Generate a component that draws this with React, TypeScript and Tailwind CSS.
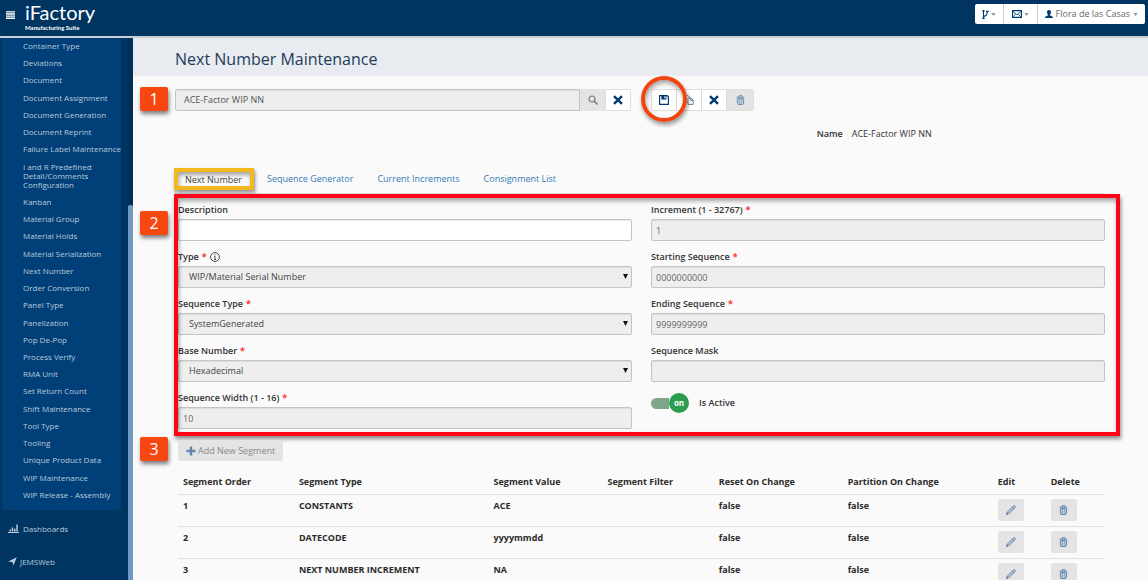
import React from "react";

type IconProps = { className?: string };

const menuItems = [
  "Container Type",
  "Deviations",
  "Document",
  "Document Assignment",
  "Document Generation",
  "Document Reprint",
  "Failure Label Maintenance",
  "I and R Predefined Detail/Comments Configuration",
  "Kanban",
  "Material Group",
  "Material Holds",
  "Material Serialization",
  "Next Number",
  "Order Conversion",
  "Panel Type",
  "Panelization",
  "Pop De-Pop",
  "Process Verify",
  "RMA Unit",
  "Set Return Count",
  "Shift Maintenance",
  "Tool Type",
  "Tooling",
  "Unique Product Data",
  "WIP Maintenance",
  "WIP Release - Assembly",
];

const segments = [
  { order: "1", type: "CONSTANTS", value: "ACE", filter: "", reset: "false", partition: "false" },
  { order: "2", type: "DATECODE", value: "yyyymmdd", filter: "", reset: "false", partition: "false" },
  { order: "3", type: "NEXT NUMBER INCREMENT", value: "NA", filter: "", reset: "false", partition: "false" },
];

function CloseIcon({ className }: IconProps) {
  return (
    <svg viewBox="0 0 10 10" className={className} fill="none" stroke="currentColor" strokeWidth="2.4" aria-hidden="true">
      <path d="M1 1.2 9 8.8M9 1.2 1 8.8" />
    </svg>
  );
}

function SearchIcon({ className }: IconProps) {
  return (
    <svg viewBox="0 0 10 10" className={className} fill="none" stroke="currentColor" strokeWidth="1.2" aria-hidden="true">
      <circle cx="4" cy="4" r="3" />
      <path d="M6.2 6.2 9.4 9.4" strokeWidth="1.6" />
    </svg>
  );
}

function SaveIcon({ className }: IconProps) {
  return (
    <svg viewBox="0 0 10 10" className={className} aria-hidden="true">
      <path d="M.6.6h7.6l1.2 1.2v7.6H.6z" fill="none" stroke="currentColor" strokeWidth="1.2" />
      <path d="M2.4.6h5v4h-5z" fill="currentColor" />
      <path d="M5.4 1.2h1.1v2.2H5.4z" fill="#fff" />
    </svg>
  );
}

function CopyIcon({ className }: IconProps) {
  return (
    <svg viewBox="0 0 10 10" className={className} fill="none" stroke="currentColor" strokeWidth=".8" strokeOpacity=".75" aria-hidden="true">
      <path d="M4 7H.8V.7h3.400l2 2" />
      <path d="M4 3h3l2.200 2.200v4.200H4z" />
      <path d="M6.800 3v2.400h2.400" />
    </svg>
  );
}

function TrashIcon({ className }: IconProps) {
  return (
    <svg viewBox="0 0 9 10" className={className} fill="none" stroke="currentColor" strokeWidth="1" aria-hidden="true">
      <path d="M.6 2.2h7.800M3 2V.7h3V2" />
      <path d="M1.400 3.600h6.200v4.600c0 .8-.5 1.300-1.200 1.300H2.600c-.7 0-1.200-.5-1.200-1.300z" fill="currentColor" fillOpacity=".25" />
      <path d="M3.400 4.200v4.600M5.600 4.200v4.600" strokeWidth=".6" />
    </svg>
  );
}

function PencilIcon({ className }: IconProps) {
  return (
    <svg viewBox="0 0 10 10" className={className} fill="none" stroke="currentColor" strokeWidth="1" aria-hidden="true">
      <path d="M.8 9.2l.7-2.4L7.6.9c.4-.4.9-.3 1.2 0l.4.4c.3.3.3.8 0 1.100L3.100 8.400z" fill="currentColor" fillOpacity=".3" />
      <path d="M6.400 2.100l1.600 1.600" />
      <path d="M.6 9.400l.5-1.600 1.100 1.100z" fill="currentColor" />
    </svg>
  );
}

function CaretIcon() {
  return (
    <svg viewBox="0 0 6 4" className="h-[3px] w-[5px] text-[#8b9aab]" fill="currentColor" aria-hidden="true">
      <path d="M0 0h6L3 4z" />
    </svg>
  );
}

function Step({ n }: { n: string }) {
  return (
    <span className="absolute -left-[35px] flex h-6 w-7 items-center justify-center rounded-[2px] bg-[#f5470f] text-base leading-none text-white shadow-[1px_3px_4px_rgba(0,0,0,0.5)]">
      {n}
    </span>
  );
}

function FieldLabel({ htmlFor, text, required, info }: { htmlFor: string; text: string; required?: boolean; info?: boolean }) {
  return (
    <label htmlFor={htmlFor} className="mb-0.5 flex items-center gap-[3px] text-[9px] leading-[14px] font-semibold text-[#333]">
      {text}
      {required && <span className="font-bold text-[#f33]">*</span>}
      {info && (
        <svg viewBox="0 0 10 10" className="h-[10px] w-[10px]" fill="none" stroke="#333" strokeWidth=".9" aria-hidden="true">
          <circle cx="5" cy="5" r="4.4" />
          <path d="M5 4.3v3.2M4.3 4.5H5M4.1 7.4h1.8M5 2.3v1.1" />
        </svg>
      )}
    </label>
  );
}

type FieldProps = { id: string; text: string; value: string; required?: boolean; info?: boolean };

function TextField({ id, text, value, required, editable }: FieldProps & { editable?: boolean }) {
  return (
    <div>
      <FieldLabel htmlFor={id} text={text} required={required} />
      <input
        id={id}
        type="text"
        defaultValue={value}
        readOnly={!editable}
        className={
          "block h-[22px] w-full rounded-[2px] border border-[#c4c4c4] px-1 text-[9px] text-[#666] shadow-[inset_0_1px_1px_rgba(0,0,0,0.08)] outline-none " +
          (editable ? "bg-white" : "bg-[#eee]")
        }
      />
    </div>
  );
}

function SelectField({ id, text, value, required, info }: FieldProps) {
  return (
    <div>
      <FieldLabel htmlFor={id} text={text} required={required} info={info} />
      <div className="relative">
        <select
          id={id}
          disabled
          defaultValue={value}
          className="block h-[22px] w-full appearance-none rounded-[2px] border border-[#c4c4c4] bg-[#eee] px-[10px] text-[9px] text-[#444] opacity-100 shadow-[inset_0_1px_1px_rgba(0,0,0,0.08)]"
        >
          <option>{value}</option>
        </select>
        <svg viewBox="0 0 6 6" className="pointer-events-none absolute top-2 right-1 h-[5px] w-[5px]" fill="#111" aria-hidden="true">
          <path d="M0 0h6L3 6z" />
        </svg>
      </div>
    </div>
  );
}

function Sidebar() {
  return (
    <aside className="flex w-[133px] shrink-0 bg-[#003562] text-[8px] leading-[9px] text-[#b9cbdc]">
      <div className="flex min-w-0 flex-1 flex-col">
        <nav className="mr-[7px] ml-0.5 flex-1 rounded-b-[3px] bg-[#003f78] pt-[3px] pb-[11px] pl-[21px]">
          <ul className="flex h-full flex-col justify-between">
            {menuItems.map((item) => (
              <li key={item}>
                <a href="#" className={item.length > 30 ? "block w-20" : "block whitespace-nowrap"}>
                  {item}
                </a>
              </li>
            ))}
          </ul>
        </nav>
        <a href="#" className="mt-[14px] ml-2 flex items-center gap-1">
          <svg viewBox="0 0 11 9" className="h-[9px] w-[11px]" fill="currentColor" aria-hidden="true">
            <path d="M0 8h11v1H0zM1.4 5.4h1.5v2H1.4zM3.7 3.6h1.5v3.8H3.7zM6 4.8h1.5v2.6H6zM8.3.6h1.5v6.8H8.3z" />
          </svg>
          Dashboards
        </a>
        <a href="#" className="mt-6 mb-[14px] ml-2 flex items-center gap-[3px]">
          <svg viewBox="0 0 9 9" className="h-[9px] w-[9px]" fill="currentColor" aria-hidden="true">
            <path d="M8.8.2 5.4 8.6 4.6 5.2.2 4.4z" />
          </svg>
          JEMSWeb
        </a>
      </div>
      <div className="flex w-[5px] flex-col bg-[#002f58] pt-[167px]">
        <div className="flex-1 rounded-t-[2px] bg-[#6f99c0]" />
      </div>
    </aside>
  );
}

export default function App() {
  const toolButton = "flex w-[25px] items-center justify-center border-r border-[#d8d8d8] bg-white text-[#003a70]";
  const rowButton = "flex h-[22px] w-[26px] items-center justify-center rounded-[2px] bg-[#e4e4e4] text-[#5f88b1]";
  const tab = "h-[25px] px-3 pb-[3px] text-[#337ab7]";
  return (
    <div className="flex h-screen flex-col overflow-hidden bg-[#fafafa] font-['Open_Sans',sans-serif] text-[9px] text-[#333]">
      <header className="z-10 flex h-[38px] shrink-0 items-start border-b-2 border-[#c6ced6] bg-[#003562]">
        <button aria-label="Menu" className="mt-[11px] ml-1.5">
          <svg viewBox="0 0 9 8" className="h-2 w-[9px]" fill="#fff" aria-hidden="true">
            <path d="M0 .2h9v1.400H0zM0 2.300h9v1.400H0zM0 4.400h9v1.400H0zM0 6.500h9v1.400H0z" />
          </svg>
        </button>
        <div className="ml-[10px] flex flex-col font-['Lato',sans-serif] text-white">
          <span className="text-xl leading-6">iFactory</span>
          <span className="text-[6px] leading-[7px] font-bold">Manufacturing Suite</span>
        </div>
        <div className="mt-1 mr-[3px] ml-auto flex h-5 divide-x divide-[#ccc] rounded-[2px] bg-white text-[#003a70]">
          <button aria-label="Branches" className="flex items-center gap-0.5 px-[7px]">
            <svg viewBox="0 0 7 9" className="h-[9px] w-[7px]" fill="none" stroke="currentColor" strokeWidth="1.1" aria-hidden="true">
              <path d="M1.500 0v9M1.500 6.600C4.800 5.600 5 4.400 5.200 2M0 1h2.800M0 8.200h2.800M4 1.400h2.800" />
            </svg>
            <CaretIcon />
          </button>
          <button aria-label="Messages" className="flex items-center gap-0.5 px-2">
            <svg viewBox="0 0 10 8" className="h-2 w-[10px]" fill="none" stroke="currentColor" strokeWidth="1" aria-hidden="true">
              <path d="M.6.6h8.800v6.800H.6z" strokeWidth="1.200" />
              <path d="M1 1.400 5 4.800l4-3.400M1.400 6.600l2.200-2.400M8.600 6.600 6.400 4.200" strokeWidth=".8" />
            </svg>
            <CaretIcon />
          </button>
          <button className="flex items-center gap-[3px] px-[7px]">
            <svg viewBox="0 0 8 8" className="h-2 w-2" fill="currentColor" aria-hidden="true">
              <path d="M4 0c1.400 0 2 1 2 2.200S5.400 4.400 4.900 4.800v.6C6.500 5.800 8 6.200 8 8H0c0-1.800 1.500-2.200 3.100-2.600v-.6C2.600 4.400 2 3.400 2 2.200S2.600 0 4 0z" />
            </svg>
            <span className="text-[#666]">Flora de las Casas</span>
            <CaretIcon />
          </button>
        </div>
      </header>

      <div className="flex min-h-0 flex-1">
        <Sidebar />
        <main className="min-w-0 flex-1">
          <div className="flex h-[38px] items-center bg-[#e8ebef] pt-1 pl-[42px]">
            <h1 className="text-base leading-6 text-[#1d3c5c]">Next Number Maintenance</h1>
          </div>

          <div className="pr-[43px] pl-[42px]">
            <div className="relative mt-[13px] flex h-[22px]">
              <div className="absolute -top-0.5 left-0">
                <Step n="1" />
              </div>
              <input
                aria-label="Next number"
                readOnly
                defaultValue="ACE-Factor WIP NN"
                className="w-[43.6%] rounded-l-[2px] border border-[#c4c4c4] bg-[#eee] px-2 text-[9px] text-[#555] shadow-[inset_0_1px_1px_rgba(0,0,0,0.08)] outline-none"
              />
              <button aria-label="Search" className="flex w-[25px] items-center justify-center bg-[#e4e4e4] text-[#777]">
                <SearchIcon className="h-[10px] w-[10px]" />
              </button>
              <button aria-label="Clear" className="flex w-[26px] items-center justify-center rounded-r-[2px] border border-[#ddd] bg-white text-[#003a70]">
                <CloseIcon className="h-[10px] w-[10px]" />
              </button>
              <div className="relative ml-5 flex rounded-[2px] border border-[#ddd]">
                <button aria-label="Save" className={toolButton}>
                  <SaveIcon className="h-[10px] w-[10px]" />
                </button>
                <button aria-label="Copy" className={toolButton}>
                  <CopyIcon className="h-[10px] w-[10px]" />
                </button>
                <button aria-label="Cancel" className={toolButton}>
                  <CloseIcon className="h-[10px] w-[10px]" />
                </button>
                <button aria-label="Delete" className="flex w-[26px] items-center justify-center bg-[#e4e4e4] text-[#6b8fb3]">
                  <TrashIcon className="h-[10px] w-[9px]" />
                </button>
                <span className="pointer-events-none absolute -top-[14px] -left-[11px] h-[46px] w-[46px] rounded-full border-4 border-[#f0450f] shadow-[1px_3px_4px_rgba(0,0,0,0.4),inset_1px_3px_4px_rgba(0,0,0,0.35)]" />
              </div>
            </div>

            <dl className="mt-[15px] flex h-4 items-center pl-[69%]">
              <dt className="font-semibold">Name</dt>
              <dd className="ml-[9px]">ACE-Factor WIP NN</dd>
            </dl>

            <div role="tablist" className="mt-[26px] flex border-b border-[#ddd]">
              <button role="tab" aria-selected="true" className="relative h-[25px] rounded-t-[2px] border border-b-0 border-[#ddd] pr-3 pb-[3px] pl-[9px] text-[#444]">
                Next Number
                <span className="pointer-events-none absolute -top-px -left-[2px] h-[22px] w-20 border-4 border-[#f2b91f] shadow-[1px_3px_4px_rgba(0,0,0,0.4),inset_1px_3px_4px_rgba(0,0,0,0.35)]" />
              </button>
              <button role="tab" className={tab}>Sequence Generator</button>
              <button role="tab" className={tab}>Current Increments</button>
              <button role="tab" className={tab}>Consignment List</button>
            </div>

            <form className="relative grid grid-cols-2 gap-x-[19px] gap-y-[9px] pt-[9px] pl-[3px]">
              <div className="absolute top-[17px] left-0">
                <Step n="2" />
              </div>
              <TextField id="description" text="Description" value="" editable />
              <TextField id="increment" text="Increment (1 - 32767)" value="1" required />
              <SelectField id="type" text="Type" value="WIP/Material Serial Number" required info />
              <TextField id="start" text="Starting Sequence" value="0000000000" required />
              <SelectField id="seqtype" text="Sequence Type" value="SystemGenerated" required />
              <TextField id="end" text="Ending Sequence" value="9999999999" required />
              <SelectField id="base" text="Base Number" value="Hexadecimal" required />
              <TextField id="mask" text="Sequence Mask" value="" />
              <TextField id="width" text="Sequence Width (1 - 16)" value="10" required />
              <label className="mt-0.5 flex h-5 items-center gap-[10px] font-semibold">
                <input type="checkbox" defaultChecked className="sr-only" />
                <span className="flex h-5 w-[38px] items-center">
                  <span className="h-[11px] w-[18px] rounded-l-full bg-[#7da68a]" />
                  <span className="flex h-5 w-5 items-center justify-center rounded-full bg-[#2b9c50] text-[8px] leading-none font-bold text-white">on</span>
                </span>
                Is Active
              </label>
              <span className="pointer-events-none absolute top-0 -right-[15px] -bottom-[7px] -left-px border-4 border-[#fb0418] shadow-[1px_3px_4px_rgba(0,0,0,0.45),inset_1px_3px_4px_rgba(0,0,0,0.35)]" />
            </form>

            <div className="relative mt-[11px] pl-[3px]">
              <div className="absolute -top-[3px] left-0">
                <Step n="3" />
              </div>
              <button className="flex h-[21px] items-center gap-0.5 rounded-[2px] bg-[#e4e4e4] px-2 text-[9px] text-[#888]">
                <svg viewBox="0 0 10 10" className="h-[10px] w-[10px]" fill="#5c86b0" aria-hidden="true">
                  <path d="M3.800.5h2.400v3.300h3.300v2.400H6.200v3.300H3.800V6.200H.5V3.800h3.300z" />
                </svg>
                Add New Segment
              </button>
            </div>

            <div className="mt-[10px] pl-[3px]">
              <table className="w-full table-fixed border-collapse text-left text-[9px] leading-3 font-bold text-[#2b2b2b]">
                <thead>
                  <tr className="h-[23px] border-b border-[#e2e2e2]">
                    <th className="w-[12.5%] pl-[5px]">Segment Order</th>
                    <th className="w-[21%] pl-[5px]">Segment Type</th>
                    <th className="w-[12.3%] pl-[5px]">Segment Value</th>
                    <th className="w-[12%] pl-[5px]">Segment Filter</th>
                    <th className="w-[13.9%] pl-[5px]">Reset On Change</th>
                    <th className="w-[16.2%] pl-[5px]">Partition On Change</th>
                    <th className="w-[5.7%] pl-[5px]">Edit</th>
                    <th className="pl-[5px]">Delete</th>
                  </tr>
                </thead>
                <tbody>
                  {segments.map((s) => (
                    <tr key={s.order} className="border-b border-[#e2e2e2] align-top">
                      <td className="pt-[5px] pl-[5px]">{s.order}</td>
                      <td className="pt-[5px] pl-[5px]">{s.type}</td>
                      <td className="pt-[5px] pl-[5px]">{s.value}</td>
                      <td className="pt-[5px] pl-[5px]">{s.filter}</td>
                      <td className="pt-[5px] pl-[5px]">{s.reset}</td>
                      <td className="pt-[5px] pl-[5px]">{s.partition}</td>
                      <td className="pt-1 pb-[5px] pl-[5px]">
                        <button aria-label={"Edit segment " + s.order} className={rowButton}>
                          <PencilIcon className="h-[10px] w-[10px]" />
                        </button>
                      </td>
                      <td className="pt-1 pb-[5px] pl-[5px]">
                        <button aria-label={"Delete segment " + s.order} className={rowButton}>
                          <TrashIcon className="h-[10px] w-[9px]" />
                        </button>
                      </td>
                    </tr>
                  ))}
                </tbody>
              </table>
            </div>
          </div>
        </main>
      </div>
    </div>
  );
}
